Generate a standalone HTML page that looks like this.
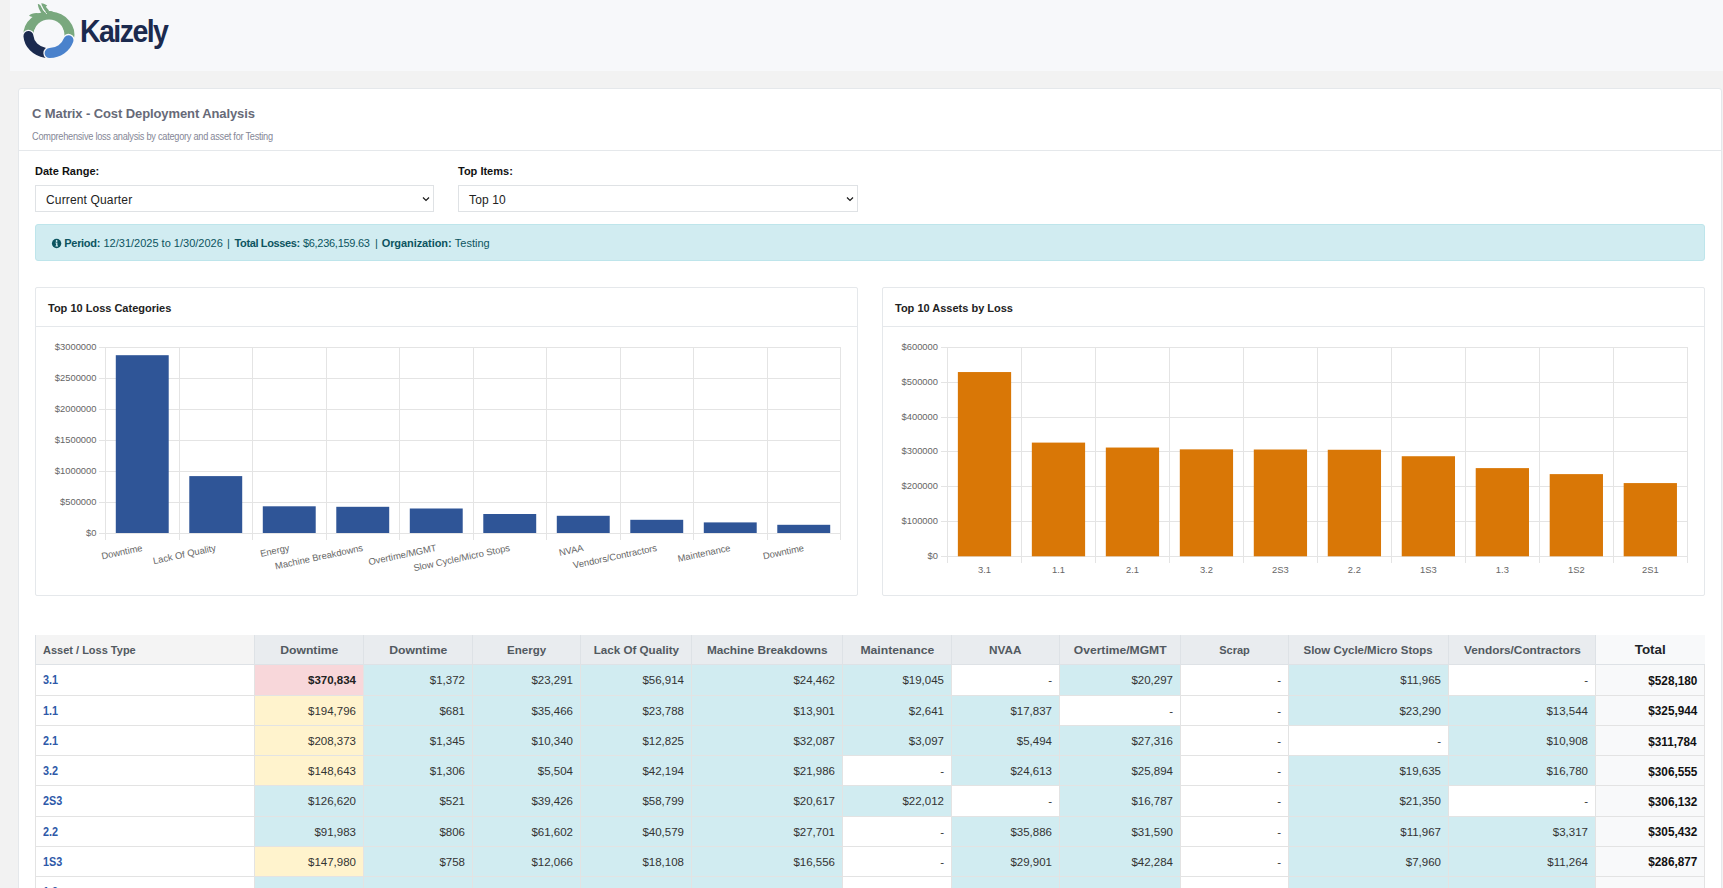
<!DOCTYPE html>
<html><head><meta charset="utf-8">
<style>
*{box-sizing:border-box;margin:0;padding:0}
html,body{width:1723px;height:888px;overflow:hidden}
body{background:#f2f2f2;font-family:"Liberation Sans",sans-serif;position:relative;color:#212529}
.hdr{position:absolute;left:10px;top:0;width:1713px;height:71px;background:#f7f8fa}
.logo-text{position:absolute;left:80px;top:13px;font-weight:bold;font-size:31px;line-height:31px;color:#1b2a4e;letter-spacing:-1.7px;transform-origin:0 0;transform:scaleX(0.92)}
.card{position:absolute;left:18px;top:88px;width:1704px;height:900px;background:#fff;border:1px solid #e5e8eb;border-radius:3px}
.ch{position:absolute;left:0;top:0;width:1702px;height:62px;border-bottom:1px solid #e5e8eb}
.title{position:absolute;left:13px;top:17px;font-size:13px;color:#676a78;font-weight:bold;letter-spacing:-0.1px}
.sub{position:absolute;left:13px;top:42px;font-size:10.4px;color:#858796;letter-spacing:-0.3px;transform-origin:0 0;transform:scaleX(0.887);white-space:nowrap}
.lbl{position:absolute;font-size:11px;font-weight:bold;color:#111}
.sel{position:absolute;top:185px;height:27px;border:1px solid #dfe2e5;background:#fff;font-size:12px;color:#222;padding:7px 0 0 10px;letter-spacing:0.15px}
.sel svg{position:absolute;right:3px;top:10px}
.alert{position:absolute;left:35px;top:224px;width:1670px;height:37px;background:#d1ecf1;border:1px solid #bee5eb;border-radius:3px;color:#0c5460;font-size:11px;padding:11px 0 0 16px;white-space:nowrap}
.at{position:absolute;top:236px;font-size:11px;color:#0c5460;white-space:nowrap;line-height:14px}
.at.b{font-weight:bold}
.cc{position:absolute;top:287px;width:823px;height:309px;border:1px solid #e5e8eb;background:#fff;border-radius:2px}
.cc .cht{position:absolute;left:0;top:0;width:821px;height:39px;border-bottom:1px solid #e5e8eb}
.cc .cht span{position:absolute;left:12px;top:14px;font-size:11px;font-weight:bold;color:#222}
svg.charts{position:absolute;left:0;top:0}
.ax{font-family:"Liberation Sans",sans-serif;font-size:9.4px;fill:#666}
.mt{position:absolute;left:35px;top:635px;border-collapse:collapse;table-layout:fixed;width:1670px}
.mt th{height:29.5px;background:#e9ecef;font-size:11px;font-weight:bold;color:#525960;text-align:center;border-left:1px solid #dee2e6;border-bottom:1px solid #dee2e6;padding:0 4px;white-space:nowrap}
.mt th span{display:inline-block}
.mt th.h0{background:#f4f4f4;text-align:left;padding-left:7px;border-left:1px solid #dee2e6}
.mt th.ht{background:#f8f9fa;color:#212529;font-size:12.3px}
.mt td{height:30.2px;font-size:11.5px;color:#333;text-align:right;padding:1px 7px 0 0;border:1px solid #e3e3e3;white-space:nowrap}
.mt td.nm{text-align:left;padding-left:7px;color:#2e59a8;font-weight:bold;background:#fff}
.mt tr.r1 td{height:30.8px}
.mt td.c{background:#d1ecf1}
.mt td.y{background:#fff3cd}
.mt td.p{background:#f8d7da;font-weight:bold;color:#222}
.mt td.w{background:#fff}
.mt td.tt{background:#f8f9fa;font-weight:bold;color:#111;font-size:12.8px}
.mt td.tt span{display:inline-block;transform:scaleX(0.92);transform-origin:100% 50%}
.mt td.nm span{display:inline-block;font-size:12.6px;transform:scaleX(0.86);transform-origin:0 50%}
</style></head><body>
<div class="hdr"></div>
<svg style="position:absolute;left:0;top:0" width="80" height="70" viewBox="0 0 80 70">
  <path d="M28.41 35.44 A20.5 18.3 0 1 1 68.95 38.60" fill="none" stroke="#79a87e" stroke-width="10"/>
  <ellipse cx="49" cy="33.6" rx="14.9" ry="14.2" fill="#f7f8fa"/>
  <path d="M28.45 36.08 A20.5 18.3 0 0 0 45.34 52.82" fill="none" stroke="#f7f8fa" stroke-width="12.6" stroke-linecap="round"/>
  <path d="M28.45 36.08 A20.5 18.3 0 0 0 45.34 52.82" fill="none" stroke="#1b2a4e" stroke-width="10" stroke-linecap="round"/>
  <path d="M49.62 53.09 A20.5 18.3 0 0 0 68.50 40.15" fill="none" stroke="#f7f8fa" stroke-width="12.6" stroke-linecap="round"/>
  <path d="M49.62 53.09 A20.5 18.3 0 0 0 68.50 40.15" fill="none" stroke="#4a82cc" stroke-width="10" stroke-linecap="round"/>
  <path d="M29 15.8 C32 12.3 39.5 12 46 15.8 C40.5 18.2 33 18.2 29 15.8Z" fill="#79a87e"/>
  <ellipse cx="49.8" cy="14.8" rx="5" ry="3.8" fill="#79a87e"/>
  <path d="M37.8 4.2 C39.5 3.6 41 6 42.5 9 C44 12 46.5 13.5 48 14.5 L45.5 17.5 C42 14.5 38.5 9.5 37.8 4.2Z" fill="#79a87e"/>
  <path d="M41.3 3.2 C43 3 45.5 4.5 47.2 5.5 L45.8 6.8 L49 10.5 L47 13 C44 10 41.5 6 41.3 3.2Z" fill="#79a87e"/>
  <path d="M41.5 6 C42.5 9 44.5 12 47 14" fill="none" stroke="#f7f8fa" stroke-width="0.8"/>
</svg>
<div class="logo-text" style="left:79.6px;top:15.5px">Kaizely</div>

<div class="card">
  <div class="ch">
    <div class="title">C Matrix - Cost Deployment Analysis</div>
    <div class="sub">Comprehensive loss analysis by category and asset for Testing</div>
  </div>
</div>

<div class="lbl" style="left:35px;top:165px">Date Range:</div>
<div class="sel" style="left:35px;width:399px">Current Quarter<svg width="8" height="6" viewBox="0 0 8 6"><path d="M1 1.5 L4 4.5 L7 1.5" fill="none" stroke="#1a1a1a" stroke-width="1.2"/></svg></div>
<div class="lbl" style="left:458px;top:165px">Top Items:</div>
<div class="sel" style="left:458px;width:400px">Top 10<svg width="8" height="6" viewBox="0 0 8 6"><path d="M1 1.5 L4 4.5 L7 1.5" fill="none" stroke="#1a1a1a" stroke-width="1.2"/></svg></div>

<div class="alert"></div>
<svg style="position:absolute;left:51px;top:238px" width="12" height="12" viewBox="0 0 12 12"><circle cx="5.6" cy="5.5" r="4.7" fill="#0c5460"/><circle cx="5.6" cy="3" r="0.9" fill="#d1ecf1"/><path d="M4.5 4.6 H6.4 V7.6 H7 V8.4 H4.5 V7.6 H5.1 V5.4 H4.5Z" fill="#d1ecf1"/></svg>
<div class="at b" style="left:64.3px;letter-spacing:-0.31px">Period:</div>
<div class="at" style="left:103.5px">12/31/2025 to 1/30/2026</div>
<div class="at" style="left:227px">|</div>
<div class="at b" style="left:234.6px;letter-spacing:-0.38px">Total Losses:</div>
<div class="at" style="left:302.9px;letter-spacing:-0.28px">$6,236,159.63</div>
<div class="at" style="left:375px">|</div>
<div class="at b" style="left:381.7px;letter-spacing:-0.08px">Organization:</div>
<div class="at" style="left:454.8px">Testing</div>

<div class="cc" style="left:35px"><div class="cht"><span>Top 10 Loss Categories</span></div></div>
<div class="cc" style="left:882px"><div class="cht"><span>Top 10 Assets by Loss</span></div></div>

<svg class="charts" width="1723" height="888" viewBox="0 0 1723 888">
<line x1="99" y1="347.50" x2="841" y2="347.50" stroke="#e4e4e4" stroke-width="1"/>
<text x="96.5" y="349.80" text-anchor="end" class="ax">$3000000</text>
<line x1="99" y1="378.50" x2="841" y2="378.50" stroke="#e4e4e4" stroke-width="1"/>
<text x="96.5" y="380.80" text-anchor="end" class="ax">$2500000</text>
<line x1="99" y1="409.50" x2="841" y2="409.50" stroke="#e4e4e4" stroke-width="1"/>
<text x="96.5" y="411.80" text-anchor="end" class="ax">$2000000</text>
<line x1="99" y1="440.50" x2="841" y2="440.50" stroke="#e4e4e4" stroke-width="1"/>
<text x="96.5" y="442.80" text-anchor="end" class="ax">$1500000</text>
<line x1="99" y1="471.50" x2="841" y2="471.50" stroke="#e4e4e4" stroke-width="1"/>
<text x="96.5" y="473.80" text-anchor="end" class="ax">$1000000</text>
<line x1="99" y1="502.50" x2="841" y2="502.50" stroke="#e4e4e4" stroke-width="1"/>
<text x="96.5" y="504.80" text-anchor="end" class="ax">$500000</text>
<line x1="99" y1="533.50" x2="841" y2="533.50" stroke="#e4e4e4" stroke-width="1"/>
<text x="96.5" y="535.80" text-anchor="end" class="ax">$0</text>
<line x1="105.50" y1="347" x2="105.50" y2="540" stroke="#e4e4e4" stroke-width="1"/>
<line x1="179.50" y1="347" x2="179.50" y2="540" stroke="#e4e4e4" stroke-width="1"/>
<line x1="252.50" y1="347" x2="252.50" y2="540" stroke="#e4e4e4" stroke-width="1"/>
<line x1="326.50" y1="347" x2="326.50" y2="540" stroke="#e4e4e4" stroke-width="1"/>
<line x1="399.50" y1="347" x2="399.50" y2="540" stroke="#e4e4e4" stroke-width="1"/>
<line x1="473.50" y1="347" x2="473.50" y2="540" stroke="#e4e4e4" stroke-width="1"/>
<line x1="546.50" y1="347" x2="546.50" y2="540" stroke="#e4e4e4" stroke-width="1"/>
<line x1="620.50" y1="347" x2="620.50" y2="540" stroke="#e4e4e4" stroke-width="1"/>
<line x1="693.50" y1="347" x2="693.50" y2="540" stroke="#e4e4e4" stroke-width="1"/>
<line x1="767.50" y1="347" x2="767.50" y2="540" stroke="#e4e4e4" stroke-width="1"/>
<line x1="840.50" y1="347" x2="840.50" y2="540" stroke="#e4e4e4" stroke-width="1"/>
<rect x="115.79" y="355.20" width="52.92" height="177.80" fill="#2f5597"/>
<rect x="189.29" y="476.10" width="52.92" height="56.90" fill="#2f5597"/>
<rect x="262.79" y="506.30" width="52.92" height="26.70" fill="#2f5597"/>
<rect x="336.29" y="506.80" width="52.92" height="26.20" fill="#2f5597"/>
<rect x="409.79" y="508.50" width="52.92" height="24.50" fill="#2f5597"/>
<rect x="483.29" y="514.00" width="52.92" height="19.00" fill="#2f5597"/>
<rect x="556.79" y="515.80" width="52.92" height="17.20" fill="#2f5597"/>
<rect x="630.29" y="519.80" width="52.92" height="13.20" fill="#2f5597"/>
<rect x="703.79" y="522.40" width="52.92" height="10.60" fill="#2f5597"/>
<rect x="777.29" y="524.80" width="52.92" height="8.20" fill="#2f5597"/>
<text transform="translate(142.95 550.8) rotate(-12)" text-anchor="end" class="ax">Downtime</text>
<text transform="translate(216.45 550.8) rotate(-12)" text-anchor="end" class="ax">Lack Of Quality</text>
<text transform="translate(289.95 550.8) rotate(-12)" text-anchor="end" class="ax">Energy</text>
<text transform="translate(363.45 550.8) rotate(-12)" text-anchor="end" class="ax">Machine Breakdowns</text>
<text transform="translate(436.95 550.8) rotate(-12)" text-anchor="end" class="ax">Overtime/MGMT</text>
<text transform="translate(510.45 550.8) rotate(-12)" text-anchor="end" class="ax">Slow Cycle/Micro Stops</text>
<text transform="translate(583.95 550.8) rotate(-12)" text-anchor="end" class="ax">NVAA</text>
<text transform="translate(657.45 550.8) rotate(-12)" text-anchor="end" class="ax">Vendors/Contractors</text>
<text transform="translate(730.95 550.8) rotate(-12)" text-anchor="end" class="ax">Maintenance</text>
<text transform="translate(804.45 550.8) rotate(-12)" text-anchor="end" class="ax">Downtime</text>
<line x1="941" y1="347.50" x2="1688" y2="347.50" stroke="#e4e4e4" stroke-width="1"/>
<text x="938" y="349.80" text-anchor="end" class="ax">$600000</text>
<line x1="941" y1="382.50" x2="1688" y2="382.50" stroke="#e4e4e4" stroke-width="1"/>
<text x="938" y="384.80" text-anchor="end" class="ax">$500000</text>
<line x1="941" y1="417.50" x2="1688" y2="417.50" stroke="#e4e4e4" stroke-width="1"/>
<text x="938" y="419.80" text-anchor="end" class="ax">$400000</text>
<line x1="941" y1="451.50" x2="1688" y2="451.50" stroke="#e4e4e4" stroke-width="1"/>
<text x="938" y="453.80" text-anchor="end" class="ax">$300000</text>
<line x1="941" y1="486.50" x2="1688" y2="486.50" stroke="#e4e4e4" stroke-width="1"/>
<text x="938" y="488.80" text-anchor="end" class="ax">$200000</text>
<line x1="941" y1="521.50" x2="1688" y2="521.50" stroke="#e4e4e4" stroke-width="1"/>
<text x="938" y="523.80" text-anchor="end" class="ax">$100000</text>
<line x1="941" y1="556.50" x2="1688" y2="556.50" stroke="#e4e4e4" stroke-width="1"/>
<text x="938" y="558.80" text-anchor="end" class="ax">$0</text>
<line x1="947.50" y1="347" x2="947.50" y2="563" stroke="#e4e4e4" stroke-width="1"/>
<line x1="1021.50" y1="347" x2="1021.50" y2="563" stroke="#e4e4e4" stroke-width="1"/>
<line x1="1095.50" y1="347" x2="1095.50" y2="563" stroke="#e4e4e4" stroke-width="1"/>
<line x1="1169.50" y1="347" x2="1169.50" y2="563" stroke="#e4e4e4" stroke-width="1"/>
<line x1="1243.50" y1="347" x2="1243.50" y2="563" stroke="#e4e4e4" stroke-width="1"/>
<line x1="1317.50" y1="347" x2="1317.50" y2="563" stroke="#e4e4e4" stroke-width="1"/>
<line x1="1391.50" y1="347" x2="1391.50" y2="563" stroke="#e4e4e4" stroke-width="1"/>
<line x1="1465.50" y1="347" x2="1465.50" y2="563" stroke="#e4e4e4" stroke-width="1"/>
<line x1="1539.50" y1="347" x2="1539.50" y2="563" stroke="#e4e4e4" stroke-width="1"/>
<line x1="1613.50" y1="347" x2="1613.50" y2="563" stroke="#e4e4e4" stroke-width="1"/>
<line x1="1687.50" y1="347" x2="1687.50" y2="563" stroke="#e4e4e4" stroke-width="1"/>
<rect x="957.86" y="372.05" width="53.27" height="184.25" fill="#d97706"/>
<rect x="1031.84" y="442.60" width="53.27" height="113.70" fill="#d97706"/>
<rect x="1105.82" y="447.54" width="53.27" height="108.76" fill="#d97706"/>
<rect x="1179.80" y="449.36" width="53.27" height="106.94" fill="#d97706"/>
<rect x="1253.78" y="449.51" width="53.27" height="106.79" fill="#d97706"/>
<rect x="1327.76" y="449.76" width="53.27" height="106.54" fill="#d97706"/>
<rect x="1401.74" y="456.23" width="53.27" height="100.07" fill="#d97706"/>
<rect x="1475.72" y="468.11" width="53.27" height="88.19" fill="#d97706"/>
<rect x="1549.70" y="474.11" width="53.27" height="82.19" fill="#d97706"/>
<rect x="1623.68" y="483.08" width="53.27" height="73.22" fill="#d97706"/>
<text x="984.49" y="572.5" text-anchor="middle" class="ax">3.1</text>
<text x="1058.47" y="572.5" text-anchor="middle" class="ax">1.1</text>
<text x="1132.45" y="572.5" text-anchor="middle" class="ax">2.1</text>
<text x="1206.43" y="572.5" text-anchor="middle" class="ax">3.2</text>
<text x="1280.41" y="572.5" text-anchor="middle" class="ax">2S3</text>
<text x="1354.39" y="572.5" text-anchor="middle" class="ax">2.2</text>
<text x="1428.37" y="572.5" text-anchor="middle" class="ax">1S3</text>
<text x="1502.35" y="572.5" text-anchor="middle" class="ax">1.3</text>
<text x="1576.33" y="572.5" text-anchor="middle" class="ax">1S2</text>
<text x="1650.31" y="572.5" text-anchor="middle" class="ax">2S1</text>
</svg>

<table class="mt"><colgroup><col style="width:219px"><col style="width:109px"><col style="width:109px"><col style="width:108px"><col style="width:111px"><col style="width:151px"><col style="width:109px"><col style="width:108px"><col style="width:121px"><col style="width:108px"><col style="width:160px"><col style="width:147px"><col style="width:109px"></colgroup><thead><tr><th class="h0"><span>Asset / Loss Type</span></th><th class=""><span style="transform:scaleX(1.108)">Downtime</span></th><th class=""><span style="transform:scaleX(1.108)">Downtime</span></th><th class=""><span style="transform:scaleX(1.05)">Energy</span></th><th class=""><span style="transform:scaleX(1.057)">Lack Of Quality</span></th><th class=""><span style="transform:scaleX(1.073)">Machine Breakdowns</span></th><th class=""><span style="transform:scaleX(1.108)">Maintenance</span></th><th class=""><span style="transform:scaleX(1.07)">NVAA</span></th><th class=""><span style="transform:scaleX(1.1)">Overtime/MGMT</span></th><th class=""><span>Scrap</span></th><th class=""><span style="transform:scaleX(1.04)">Slow Cycle/Micro Stops</span></th><th class=""><span style="transform:scaleX(1.074)">Vendors/Contractors</span></th><th class="ht"><span style="transform:scaleX(1.09)">Total</span></th></tr></thead><tbody><tr class="r1"><td class="nm"><span>3.1</span></td><td class="p">$370,834</td><td class="c">$1,372</td><td class="c">$23,291</td><td class="c">$56,914</td><td class="c">$24,462</td><td class="c">$19,045</td><td class="w">-</td><td class="c">$20,297</td><td class="w">-</td><td class="c">$11,965</td><td class="w">-</td><td class="tt"><span>$528,180</span></td></tr><tr><td class="nm"><span>1.1</span></td><td class="y">$194,796</td><td class="c">$681</td><td class="c">$35,466</td><td class="c">$23,788</td><td class="c">$13,901</td><td class="c">$2,641</td><td class="c">$17,837</td><td class="w">-</td><td class="w">-</td><td class="c">$23,290</td><td class="c">$13,544</td><td class="tt"><span>$325,944</span></td></tr><tr><td class="nm"><span>2.1</span></td><td class="y">$208,373</td><td class="c">$1,345</td><td class="c">$10,340</td><td class="c">$12,825</td><td class="c">$32,087</td><td class="c">$3,097</td><td class="c">$5,494</td><td class="c">$27,316</td><td class="w">-</td><td class="w">-</td><td class="c">$10,908</td><td class="tt"><span>$311,784</span></td></tr><tr><td class="nm"><span>3.2</span></td><td class="y">$148,643</td><td class="c">$1,306</td><td class="c">$5,504</td><td class="c">$42,194</td><td class="c">$21,986</td><td class="w">-</td><td class="c">$24,613</td><td class="c">$25,894</td><td class="w">-</td><td class="c">$19,635</td><td class="c">$16,780</td><td class="tt"><span>$306,555</span></td></tr><tr><td class="nm"><span>2S3</span></td><td class="c">$126,620</td><td class="c">$521</td><td class="c">$39,426</td><td class="c">$58,799</td><td class="c">$20,617</td><td class="c">$22,012</td><td class="w">-</td><td class="c">$16,787</td><td class="w">-</td><td class="c">$21,350</td><td class="w">-</td><td class="tt"><span>$306,132</span></td></tr><tr><td class="nm"><span>2.2</span></td><td class="c">$91,983</td><td class="c">$806</td><td class="c">$61,602</td><td class="c">$40,579</td><td class="c">$27,701</td><td class="w">-</td><td class="c">$35,886</td><td class="c">$31,590</td><td class="w">-</td><td class="c">$11,967</td><td class="c">$3,317</td><td class="tt"><span>$305,432</span></td></tr><tr><td class="nm"><span>1S3</span></td><td class="y">$147,980</td><td class="c">$758</td><td class="c">$12,066</td><td class="c">$18,108</td><td class="c">$16,556</td><td class="w">-</td><td class="c">$29,901</td><td class="c">$42,284</td><td class="w">-</td><td class="c">$7,960</td><td class="c">$11,264</td><td class="tt"><span>$286,877</span></td></tr><tr><td class="nm"><span>1.3</span></td><td class="c">$112,430</td><td class="c">$612</td><td class="c">$21,118</td><td class="c">$33,905</td><td class="c">$19,240</td><td class="w">-</td><td class="c">$22,108</td><td class="c">$28,455</td><td class="w">-</td><td class="c">$9,870</td><td class="c">$5,013</td><td class="tt"><span>$253,151</span></td></tr></tbody></table>
</body></html>
